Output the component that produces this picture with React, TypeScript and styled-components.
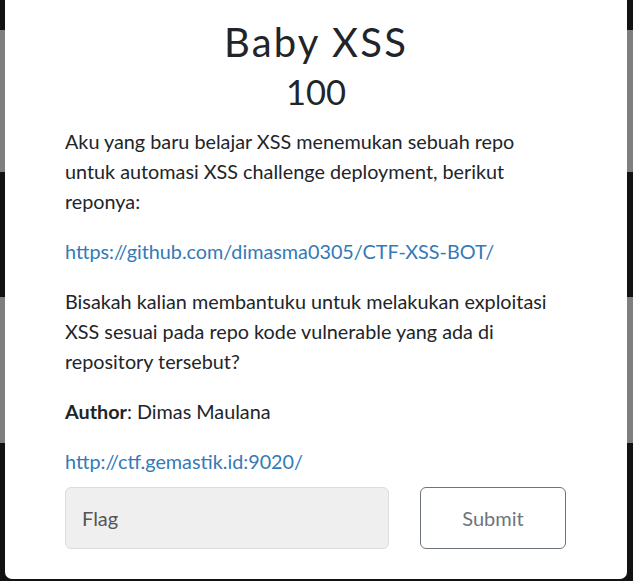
import styled, { createGlobalStyle } from 'styled-components';

const GlobalStyle = createGlobalStyle`
  html, body {
    margin: 0;
    padding: 0;
    height: 100%;
    overflow: hidden;
    background-color: #111214;
    font-family: Lato, "Open Sans", sans-serif;
  }
  #root {
    height: 100%;
  }
`;

const bands = [
  { tone: 'dark', height: 30 },
  { tone: 'card', height: 142 },
  { tone: 'dark', height: 125 },
  { tone: 'card', height: 146 },
  { tone: 'dark', height: 138 },
];

const App = () => {
  return (
    <>
      <GlobalStyle />
      <StyledBackdrop>
        {bands.map((band, i) => (
          <StyledBand key={i} $tone={band.tone} style={{ height: band.height }} />
        ))}
      </StyledBackdrop>
      <StyledModal>
        <StyledTitle>Baby XSS</StyledTitle>
        <StyledValue>100</StyledValue>
        <StyledDescription>
          <p>
            Aku yang baru belajar XSS menemukan sebuah repo untuk automasi XSS
            challenge deployment, berikut reponya:
          </p>
          <p>
            <StyledLink href="#">
              https://github.com/dimasma0305/CTF-XSS-BOT/
            </StyledLink>
          </p>
          <p>
            Bisakah kalian membantuku untuk melakukan exploitasi XSS sesuai pada
            repo kode vulnerable yang ada di repository tersebut?
          </p>
          <p>
            <strong>Author</strong>: Dimas Maulana
          </p>
          <p>
            <StyledLink href="#">http://ctf.gemastik.id:9020/</StyledLink>
          </p>
        </StyledDescription>
        <StyledSubmitRow>
          <StyledFlagInput placeholder="Flag" />
          <StyledSubmitButton>Submit</StyledSubmitButton>
        </StyledSubmitRow>
      </StyledModal>
    </>
  );
};

const StyledBackdrop = styled.div`
  display: flex;
  flex-direction: column;
  height: 100%;
`;

const StyledBand = styled.div<{ $tone: string }>`
  flex-shrink: 0;
  background-color: ${({ $tone }) => ($tone === 'card' ? '#7f7f7f' : '#111214')};
`;

const StyledModal = styled.div`
  position: fixed;
  top: 0;
  left: 5px;
  width: 622px;
  height: 579px;
  box-sizing: border-box;
  padding: 18px 60px 0 60px;
  background-color: #ffffff;
  border-radius: 0 0 7px 7px;
  color: #212529;
`;

const StyledTitle = styled.h3`
  margin: 0;
  text-align: center;
  font-size: 40px;
  font-weight: 400;
  letter-spacing: 2.2px;
  line-height: 1.2;
`;

const StyledValue = styled.h4`
  margin: 5px 0 14px;
  text-align: center;
  font-size: 34.5px;
  font-weight: 400;
  line-height: 1.2;
`;

const StyledDescription = styled.div`
  font-size: 19.8px;
  line-height: 30px;
  p {
    margin: 0 0 20px;
  }
  strong {
    font-weight: 700;
  }
`;

const StyledLink = styled.a`
  color: #337ab7;
  text-decoration: none;
`;

const StyledSubmitRow = styled.div`
  display: grid;
  grid-template-columns: 324px 146px;
  column-gap: 31px;
  margin-top: -9px;
`;

const StyledFlagInput = styled.input`
  height: 62px;
  box-sizing: border-box;
  padding: 0 16px;
  border: 1px solid #dcdcdc;
  border-radius: 6px;
  background-color: #efefef;
  font-family: Lato, sans-serif;
  font-size: 20px;
  color: #495057;
  outline: none;
  &::placeholder {
    color: #555555;
  }
`;

const StyledSubmitButton = styled.button`
  height: 62px;
  border: 1px solid #6c757d;
  border-radius: 6px;
  background-color: #ffffff;
  color: #6c757d;
  font-family: Lato, sans-serif;
  font-size: 20px;
  cursor: pointer;
`;

export default App;
